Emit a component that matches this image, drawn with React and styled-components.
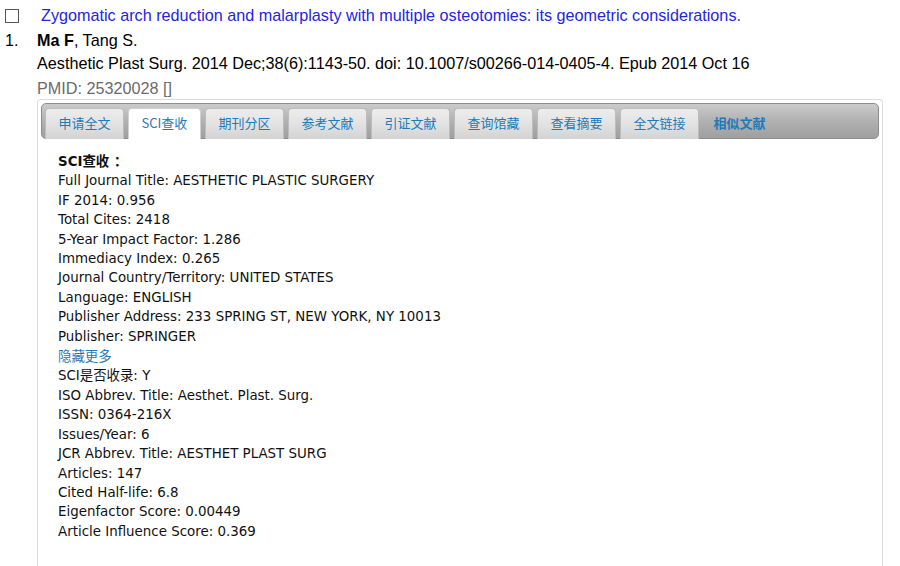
import React from "react";
import styled, { createGlobalStyle } from "styled-components";

const GlobalStyle = createGlobalStyle`
  html, body {
    margin: 0;
    padding: 0;
    background: #fff;
  }
  body {
    font-family: "Liberation Sans", Arial, sans-serif;
    color: #000;
  }
`;

const PageStyled = styled.div`
  width: 900px;
  height: 566px;
  overflow: hidden;
  padding-left: 5px;
  box-sizing: border-box;
`;

const TitleRowStyled = styled.div`
  display: flex;
  align-items: center;
  height: 30px;
  padding-top: 1px;
  box-sizing: border-box;
`;

const CheckboxStyled = styled.span`
  display: inline-block;
  width: 12px;
  height: 12px;
  border: 1px solid #555;
  flex-shrink: 0;
`;

const TitleLinkStyled = styled.a`
  margin-left: 22px;
  font-size: 16.2px;
  color: #2525dd;
  text-decoration: none;
  white-space: nowrap;
`;

const EntryStyled = styled.div`
  display: flex;
`;

const NumberStyled = styled.div`
  width: 32px;
  flex-shrink: 0;
  font-size: 16px;
  line-height: 22px;
`;

const BodyStyled = styled.div`
  flex: 1;
  min-width: 0;
`;

const LineStyled = styled.div`
  font-size: 16.2px;
  line-height: ${(p) => p.$lh || 24}px;
  color: ${(p) => (p.$muted ? "#6b6b6b" : "#000")};
  white-space: nowrap;
`;

const BoxStyled = styled.div`
  width: 846px;
  height: 500px;
  box-sizing: border-box;
  border: 1px solid #dcdcdc;
  border-bottom: none;
  border-radius: 4px 4px 0 0;
  padding: 3px;
  margin-top: -1px;
`;

const TabBarStyled = styled.ul`
  display: flex;
  align-items: flex-end;
  gap: 4px;
  list-style: none;
  margin: 0;
  height: 36px;
  padding: 4px 3px 0;
  box-sizing: border-box;
  border: 1px solid #8e8e8e;
  border-radius: 5px;
  background: linear-gradient(to bottom, #cbcbcb 0%, #b1b1b1 50%, #9f9f9f 100%);
`;

const TabStyled = styled.li`
  height: 31px;
  margin-bottom: -1px;
  padding: 0 12.5px 4px;
  box-sizing: border-box;
  display: flex;
  align-items: center;
  font-size: 13px;
  font-family: "Noto Sans CJK SC", "DejaVu Sans", sans-serif;
  font-weight: ${(p) => (p.$bold ? 700 : 400)};
  color: #1f7ab8;
  white-space: nowrap;
  border-radius: 4px 4px 0 0;
  border: 1px solid
    ${(p) => (p.$plain ? "transparent" : p.$active ? "#d0d0d0" : "#bdbdbd")};
  border-bottom: none;
  background: ${(p) =>
    p.$plain
      ? "transparent"
      : p.$active
      ? "#fff"
      : "linear-gradient(to bottom, #ededed 0%, #e1e1e1 55%, #d3d3d3 100%)"};
  margin-left: ${(p) => (p.$plain ? "-3px" : "0")};
  cursor: pointer;
`;

const PanelStyled = styled.div`
  padding: 13px 17px;
  font-family: "DejaVu Sans", Verdana, "Noto Sans CJK SC", sans-serif;
  font-size: 13.4px;
  line-height: 19.4px;
  color: #111;
`;

const InfoLineStyled = styled.div`
  white-space: nowrap;
  font-weight: ${(p) => (p.$bold ? 700 : 400)};
`;

const ToggleLinkStyled = styled.a`
  color: #1f7ab8;
  text-decoration: none;
  font-family: "Noto Sans CJK SC", sans-serif;
`;

const tabs = [
  "申请全文",
  "SCI查收",
  "期刊分区",
  "参考文献",
  "引证文献",
  "查询馆藏",
  "查看摘要",
  "全文链接",
];

const mainInfo = [
  "Full Journal Title: AESTHETIC PLASTIC SURGERY",
  "IF 2014: 0.956",
  "Total Cites: 2418",
  "5-Year Impact Factor: 1.286",
  "Immediacy Index: 0.265",
  "Journal Country/Territory: UNITED STATES",
  "Language: ENGLISH",
  "Publisher Address: 233 SPRING ST, NEW YORK, NY 10013",
  "Publisher: SPRINGER",
];

const moreInfo = [
  "SCI是否收录: Y",
  "ISO Abbrev. Title: Aesthet. Plast. Surg.",
  "ISSN: 0364-216X",
  "Issues/Year: 6",
  "JCR Abbrev. Title: AESTHET PLAST SURG",
  "Articles: 147",
  "Cited Half-life: 6.8",
  "Eigenfactor Score: 0.00449",
  "Article Influence Score: 0.369",
];

export default function App() {
  const [active, setActive] = React.useState(1);

  return (
    <PageStyled>
      <GlobalStyle />
      <TitleRowStyled>
        <CheckboxStyled />
        <TitleLinkStyled href="#">
          Zygomatic arch reduction and malarplasty with multiple osteotomies:
          its geometric considerations.
        </TitleLinkStyled>
      </TitleRowStyled>
      <EntryStyled>
        <NumberStyled>1.</NumberStyled>
        <BodyStyled>
          <LineStyled $lh={20}>
            <b>Ma F</b>, Tang S.
          </LineStyled>
          <LineStyled $lh={26}>
            Aesthetic Plast Surg. 2014 Dec;38(6):1143-50. doi:
            10.1007/s00266-014-0405-4. Epub 2014 Oct 16
          </LineStyled>
          <LineStyled $lh={24} $muted>
            PMID: 25320028 []
          </LineStyled>
          <BoxStyled>
            <TabBarStyled>
              {tabs.map((t, i) => (
                <TabStyled
                  key={t}
                  $active={i === active}
                  onClick={() => setActive(i)}
                >
                  {t}
                </TabStyled>
              ))}
              <TabStyled $plain $bold>
                相似文献
              </TabStyled>
            </TabBarStyled>
            <PanelStyled>
              <InfoLineStyled $bold>SCI查收 ：</InfoLineStyled>
              {mainInfo.map((line) => (
                <InfoLineStyled key={line}>{line}</InfoLineStyled>
              ))}
              <InfoLineStyled>
                <ToggleLinkStyled href="#">隐藏更多</ToggleLinkStyled>
              </InfoLineStyled>
              {moreInfo.map((line) => (
                <InfoLineStyled key={line}>{line}</InfoLineStyled>
              ))}
            </PanelStyled>
          </BoxStyled>
        </BodyStyled>
      </EntryStyled>
    </PageStyled>
  );
}
